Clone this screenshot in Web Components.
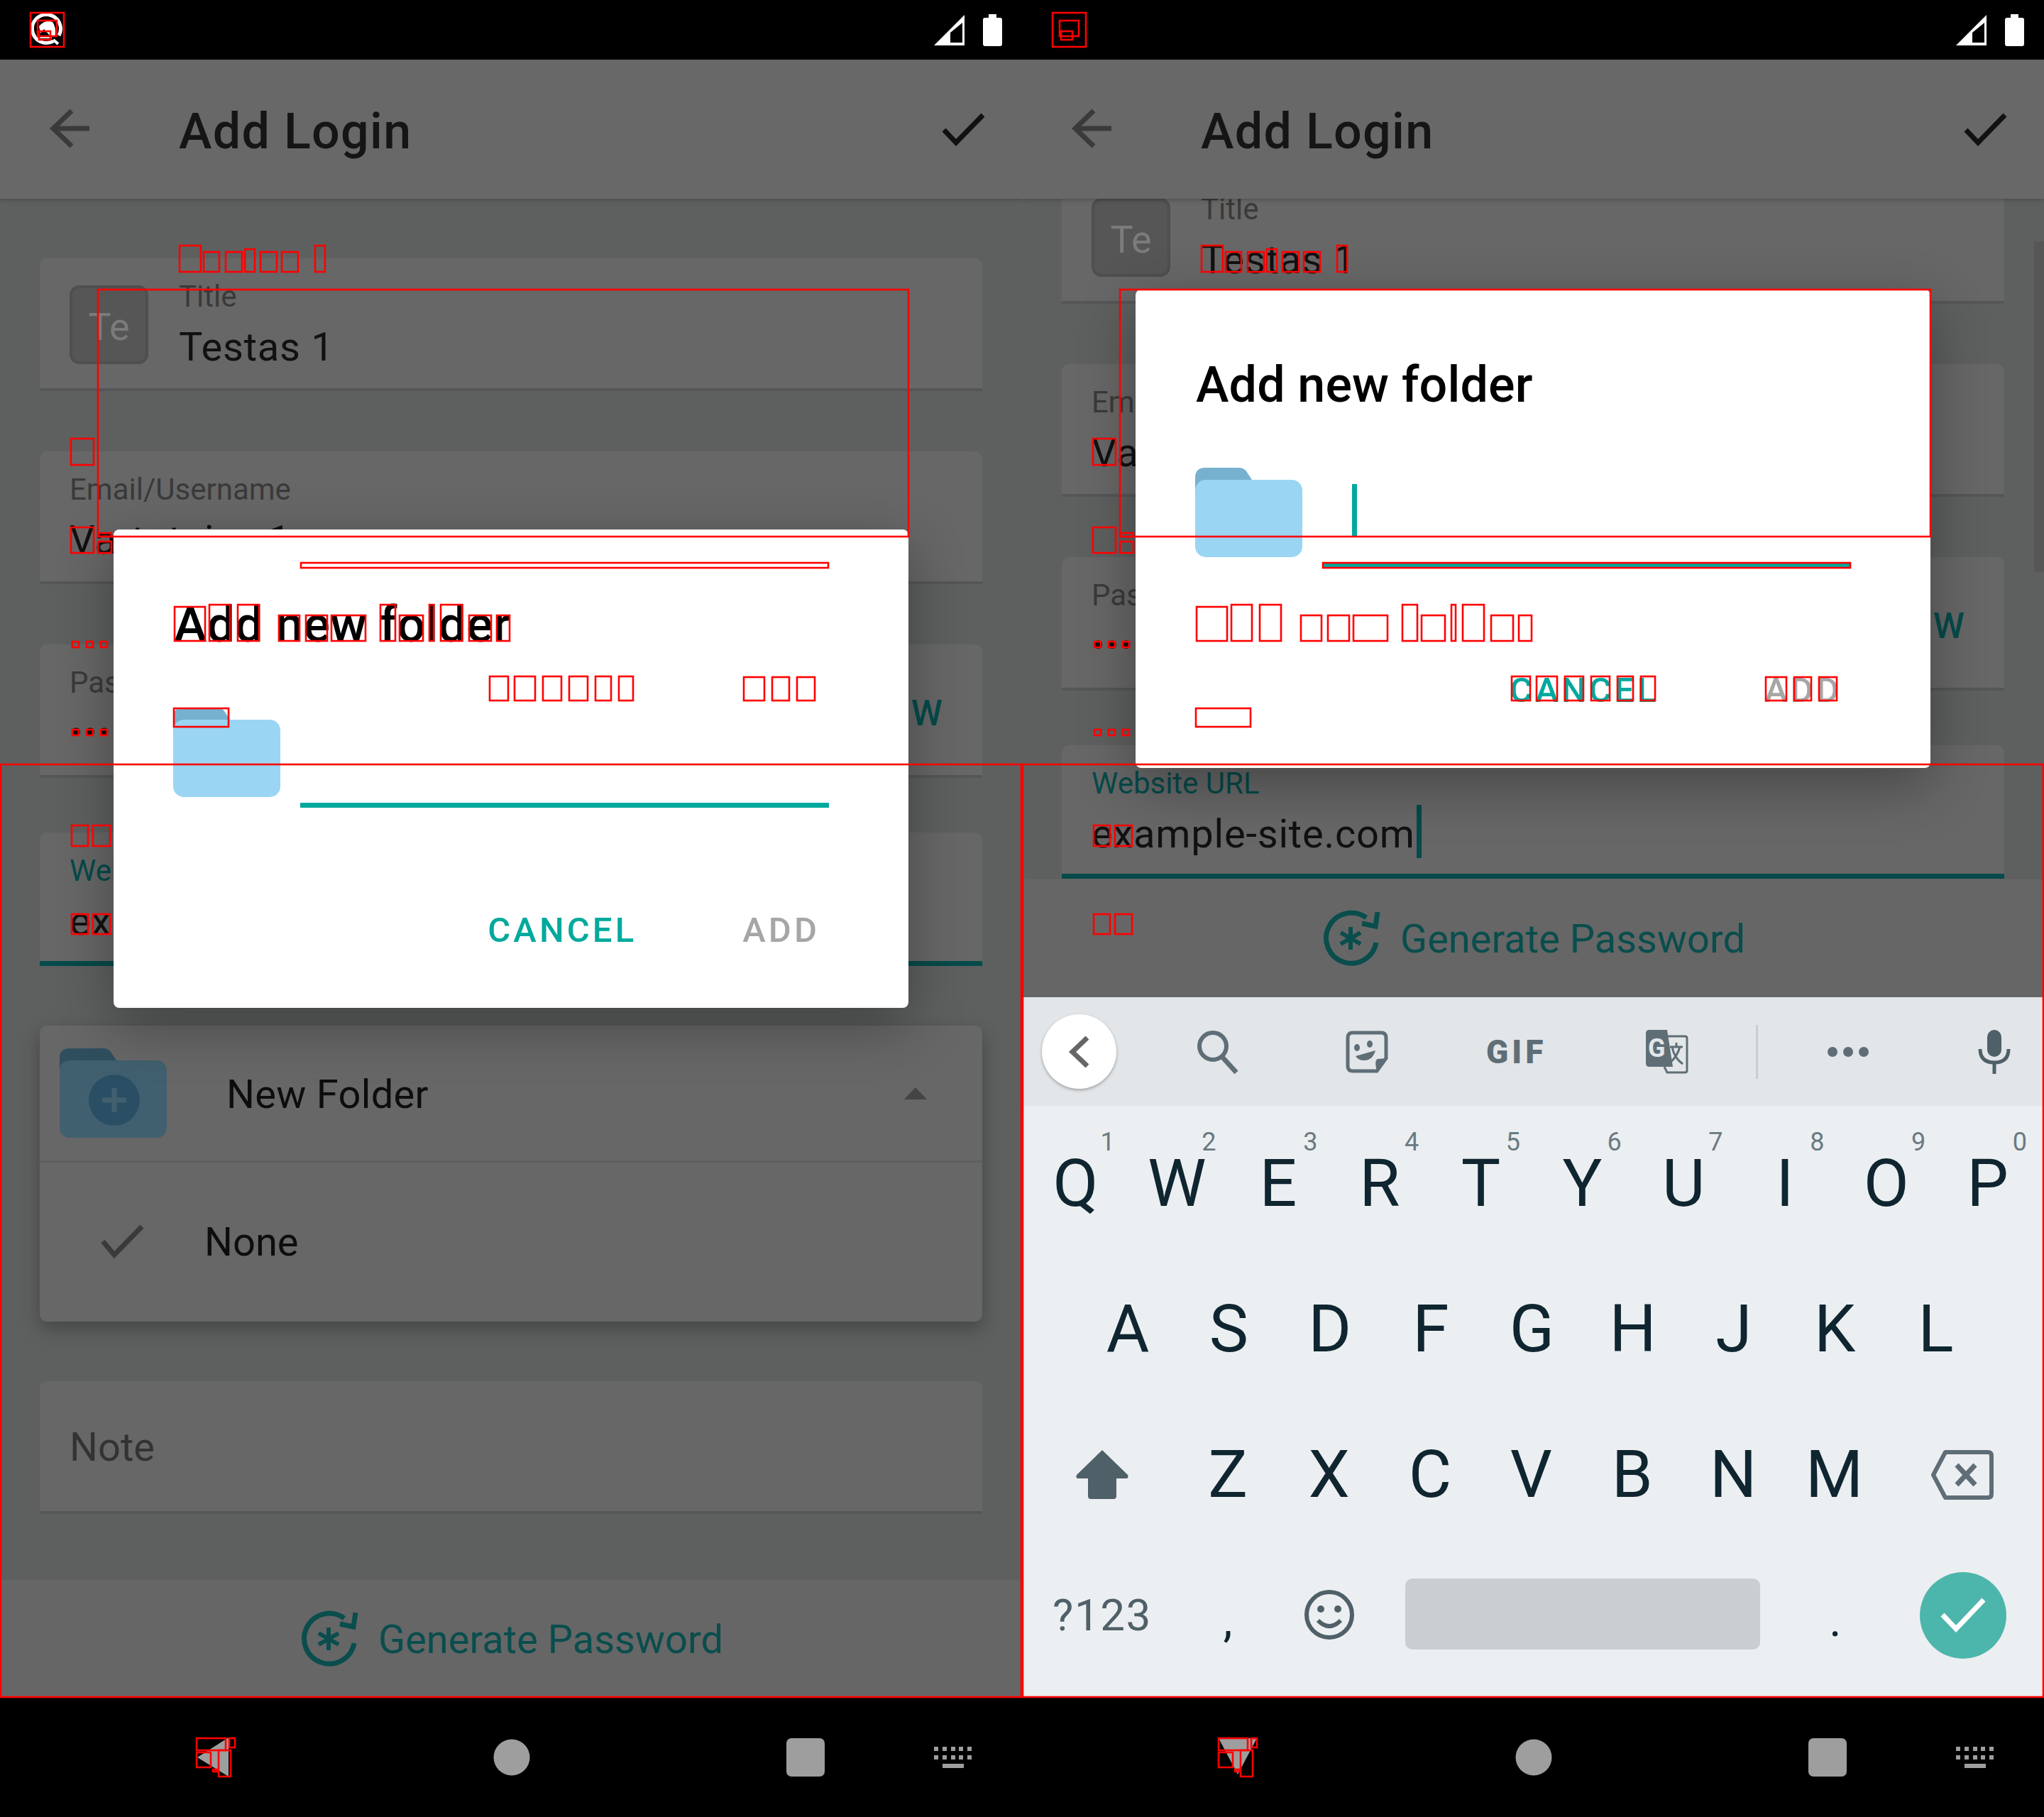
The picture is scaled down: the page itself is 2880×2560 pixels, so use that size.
<!DOCTYPE html>
<html>
<head>
<meta charset="utf-8">
<title>Add Login</title>
<style>
   html, body { margin: 0; padding: 0; background: #000; }
   body { font-family: Roboto, "Liberation Sans", sans-serif; width: 2880px; height: 2560px; display: flex; overflow: hidden; }
</style>
</head>
<body>

<phone-screen>
   <status-bar app-icon></status-bar>
   <app-toolbar>Add Login</app-toolbar>
   <form-scroll>
      <form-field style="margin-top:84px" label="Title" value="Testas 1" logo="Te"></form-field>
      <form-field style="margin-top:85px" label="Email/Username" value="Vartotojas 1"></form-field>
      <form-field style="margin-top:85px;height:188px" label="Password" value="•••••••" action="SHOW"></form-field>
      <form-field style="margin-top:77px;height:188px" label="Website URL" value="example-site.com" focused></form-field>
      <folder-select style="margin-top:84px"></folder-select>
      <form-field style="margin-top:84px" placeholder="Note"></form-field>
   </form-scroll>
   <generate-bar></generate-bar>
   <nav-bar></nav-bar>
   <folder-dialog style="top:746px"></folder-dialog>
   <glitch-boxes></glitch-boxes>
</phone-screen>

<phone-screen>
   <status-bar></status-bar>
   <app-toolbar>Add Login</app-toolbar>
   <form-scroll scrolled>
      <form-field style="margin-top:84px" label="Title" value="Testas 1" logo="Te"></form-field>
      <form-field style="margin-top:85px" label="Email/Username" value="Vartotojas 1"></form-field>
      <form-field style="margin-top:85px;height:188px" label="Password" value="•••••••" action="SHOW"></form-field>
      <form-field style="margin-top:77px;height:188px" label="Website URL" value="example-site.com" focused></form-field>
   </form-scroll>
   <generate-bar></generate-bar>
   <soft-keyboard></soft-keyboard>
   <nav-bar pointing-down></nav-bar>
   <folder-dialog style="top:408px" caret></folder-dialog>
   <glitch-boxes></glitch-boxes>
</phone-screen>

<script>
class PhoneScreen extends HTMLElement {
   constructor() {
      super();
      this.attachShadow({ mode: 'open' });
      this.shadowRoot.innerHTML = `
         <style>
            :host { display: flex; flex-direction: column; position: relative; width: 1440px; height: 2560px; overflow: hidden; flex: none; background: #5e6060; }
         </style>
         <slot></slot>
      `;
   }
}
customElements.define('phone-screen', PhoneScreen);

class StatusBar extends HTMLElement {
   constructor() {
      super();
      this.attachShadow({ mode: 'open' });
   }
   connectedCallback() {
      const appIcon = this.hasAttribute('app-icon') ? `
         <svg width="50" height="50" viewBox="0 0 50 50">
            <path d="M33 41 A20 20 0 1 1 41 33" fill="none" stroke="#fff" stroke-width="5"/>
            <path d="M33 39 L40 45" stroke="#fff" stroke-width="4"/>
            <path d="M13 20 Q22 10 32 14 Q37 20 36 33 L28 33 L20 24 L15 30 Z" fill="#fff"/>
            <rect x="13" y="35" width="18" height="2" fill="#fff"/>
         </svg>` : '<span></span>';
      this.shadowRoot.innerHTML = `
         <style>
            :host { display: flex; flex: none; height: 84px; background: #000; align-items: center; padding: 0 28px 0 42px; box-sizing: border-box; justify-content: space-between; }
            svg { display: block; }
            .right { display: flex; align-items: flex-start; gap: 26px; }
         </style>
         ${appIcon}
         <div class="right">
            <svg width="43" height="44" viewBox="0 0 43 44">
               <path fill-rule="evenodd" d="M0 44 L43 1 L43 44 Z M23 26 L23 40 L40 40 L40 12 Z" fill="#fff"/>
            </svg>
            <svg width="27" height="45" viewBox="0 0 27 45">
               <path d="M8 0 H19 V5 H24 Q27 5 27 8 V42 Q27 45 24 45 H3 Q0 45 0 42 V8 Q0 5 3 5 H8 Z" fill="#fff"/>
            </svg>
         </div>
      `;
   }
}
customElements.define('status-bar', StatusBar);

class AppToolbar extends HTMLElement {
   constructor() {
      super();
      this.attachShadow({ mode: 'open' });
      this.shadowRoot.innerHTML = `
         <style>
            :host { display: flex; flex: none; position: relative; z-index: 2; height: 196px; align-items: center; background: #686868; box-shadow: 0 2px 6px rgba(0,0,0,.22); box-sizing: border-box; padding: 0 50px 0 68px; color: #151515; font-size: 70px; font-weight: 500; }
            svg { display: block; flex: none; }
            .title { flex: 1; margin-left: 124px; line-height: 80px; margin-top: 5px; letter-spacing: 1.300px; }
            .back { margin-top: 2px; }
            .done { margin-top: 3px; }
         </style>
         <svg class="back" width="60" height="60" viewBox="0 0 60 60">
            <path d="M58 28 H8 M33 3 L7 28 L33 53" fill="none" stroke="#3a3a3a" stroke-width="7"/>
         </svg>
         <div class="title"><slot></slot></div>
         <svg class="done" width="64" height="50" viewBox="0 0 64 50">
            <path d="M4 24 L21 42 L59 3" fill="none" stroke="#111" stroke-width="7"/>
         </svg>
      `;
   }
}
customElements.define('app-toolbar', AppToolbar);

class FormScroll extends HTMLElement {
   constructor() {
      super();
      this.attachShadow({ mode: 'open' });
   }
   connectedCallback() {
      const scrolled = this.hasAttribute('scrolled');
      this.shadowRoot.innerHTML = `
         <style>
            :host { display: block; flex: 1; min-height: 0; position: relative; overflow: hidden; background: #5e6060; }
            .inner { display: flex; flex-direction: column; margin-top: ${scrolled ? -123 : 0}px; }
            .thumb { position: absolute; top: 60px; right: 0; width: 14px; height: 466px; background: #565656; }
         </style>
         <div class="inner"><slot></slot></div>
         ${scrolled ? '<div class="thumb"></div>' : ''}
      `;
   }
}
customElements.define('form-scroll', FormScroll);

class FormField extends HTMLElement {
   constructor() {
      super();
      this.attachShadow({ mode: 'open' });
   }
   connectedCallback() {
      const label = this.getAttribute('label');
      const value = this.getAttribute('value');
      const logo = this.getAttribute('logo');
      const action = this.getAttribute('action');
      const placeholder = this.getAttribute('placeholder');
      const focused = this.hasAttribute('focused');
      this.shadowRoot.innerHTML = `
         <style>
            :host { display: flex; flex: none; box-sizing: border-box; height: 187px; margin: 0 56px; padding: 0 0 0 42px; background: #676767; border-radius: 10px 10px 0 0; border-bottom: ${focused ? '7px solid #064a4a' : '4px solid #545658'}; }
            .logo { flex: none; width: 111px; height: 111px; box-sizing: border-box; margin: 38px 43px 0 0; border: 4px solid #4f4f4f; border-radius: 14px; background: #565656; color: #7b7b7b; font-size: 54px; line-height: 109px; text-align: center; }
            .col { flex: 1; padding-top: 30px; min-width: 0; }
            .label { font-size: 42px; line-height: 48px; color: ${focused ? '#064a4a' : '#3a3a3a'}; }
            .value { font-size: 56px; line-height: 64px; margin-top: 15px; color: #111; white-space: nowrap; letter-spacing: .8px; }
            .value span { display: inline-block; position: relative; }
            .caret::after { content: ''; position: absolute; left: 100%; margin-left: 2px; top: -9px; width: 7px; height: 75px; background: #064a4a; }
            .placeholder { font-size: 56px; line-height: 64px; margin-top: 31px; color: #333; }
            .action { flex: none; align-self: center; padding: 10px 54px 0 0; font-size: 50px; line-height: 56px; font-weight: 500; letter-spacing: 2px; color: #064a4a; }
         </style>
         ${logo ? `<div class="logo">${logo}</div>` : ''}
         <div class="col">
            ${placeholder
               ? `<div class="placeholder">${placeholder}</div>`
               : `<div class="label">${label}</div>
                  <div class="value"><span class="${focused ? 'caret' : ''}">${value}</span></div>`}
         </div>
         ${action ? `<div class="action">${action}</div>` : ''}
      `;
   }
}
customElements.define('form-field', FormField);

class FolderSelect extends HTMLElement {
   constructor() {
      super();
      this.attachShadow({ mode: 'open' });
      this.shadowRoot.innerHTML = `
         <style>
            :host { display: block; flex: none; height: 417px; margin: 0 56px; background: #676767; border-radius: 10px; box-shadow: 0 10px 26px rgba(0,0,0,.28); color: #0d0d0d; font-size: 56px; }
            .head { display: flex; align-items: center; height: 193px; box-sizing: border-box; padding: 0 78px 0 28px; border-bottom: 3px solid #5f5f5f; }
            .head svg { display: block; flex: none; }
            .name { flex: 1; margin-left: 84px; line-height: 64px; margin-top: 4px; letter-spacing: .3px; }
            .row { display: flex; align-items: center; height: 224px; box-sizing: border-box; padding: 0 0 0 86px; }
            .row svg { flex: none; display: block; }
            .row span { margin-left: 84px; line-height: 64px; }
         </style>
         <div class="head">
            <svg width="151" height="126" viewBox="0 0 151 126">
               <path d="M0 14 Q0 0 14 0 H62 Q70 0 74 8 L82 20 H70 V60 H0 Z" fill="#2f4f5f"/>
               <rect x="0" y="17" width="151" height="109" rx="14" fill="#41606f"/>
               <circle cx="77" cy="73" r="36" fill="#2a4f64"/>
               <path d="M77 56 V90 M60 73 H94" stroke="#41606f" stroke-width="7"/>
            </svg>
            <div class="name">New Folder</div>
            <svg width="32" height="17" viewBox="0 0 32 17"><path d="M16 0 L32 17 H0 Z" fill="#444"/></svg>
         </div>
         <div class="row">
            <svg width="62" height="48" viewBox="0 0 62 48">
               <path d="M3 23 L19 42 L58 2" fill="none" stroke="#3a3a3a" stroke-width="7"/>
            </svg>
            <span>None</span>
         </div>
      `;
   }
}
customElements.define('folder-select', FolderSelect);

class GenerateBar extends HTMLElement {
   constructor() {
      super();
      this.attachShadow({ mode: 'open' });
      this.shadowRoot.innerHTML = `
         <style>
            :host { display: flex; flex: none; height: 167px; align-items: center; box-sizing: border-box; padding: 0 0 0 423px; background: #666; border-top: 1px solid #626363; color: #0a4d4d; font-size: 56px; gap: 28px; }
            svg { display: block; flex: none; }
            span { line-height: 64px; margin-top: 1px; }
         </style>
         <svg width="82" height="80" viewBox="0 0 82 80">
            <path d="M76 46 A35.500 35.500 0 1 1 62 11" fill="none" stroke="#0a4d4d" stroke-width="7"/>
            <path d="M78 3 L75 23 L56 19" fill="none" stroke="#0a4d4d" stroke-width="7"/>
            <path d="M40 24 V56 M26 32 L54 48 M54 32 L26 48" stroke="#0a4d4d" stroke-width="6"/>
         </svg>
         <span>Generate Password</span>
      `;
   }
}
customElements.define('generate-bar', GenerateBar);

class NavBar extends HTMLElement {
   constructor() {
      super();
      this.attachShadow({ mode: 'open' });
   }
   connectedCallback() {
      const back = this.hasAttribute('pointing-down')
         ? '<path d="M1 1 H55 L28 52 Z" fill="#9e9e9e"/>'
         : '<path d="M2 28 L46 0 V55 Z" fill="#9e9e9e"/>';
      this.shadowRoot.innerHTML = `
         <style>
            :host { display: flex; flex: none; height: 168px; align-items: center; background: #000; padding-left: 276px; box-sizing: border-box; }
            svg { display: block; flex: none; }
         </style>
         <svg width="56" height="56" viewBox="0 0 56 56" style="margin-right:363px">${back}</svg>
         <svg width="52" height="52" viewBox="0 0 52 52" style="margin-right:361px"><circle cx="26" cy="26" r="25.500" fill="#9e9e9e"/></svg>
         <svg width="54" height="54" viewBox="0 0 54 54" style="margin-right:154px"><rect width="54" height="54" rx="7" fill="#9e9e9e"/></svg>
         <svg width="58" height="30" viewBox="0 0 58 30" fill="#9e9e9e">
            <rect x="0" y="0" width="6" height="6"/><rect x="12" y="0" width="6" height="6"/><rect x="24" y="0" width="6" height="6"/><rect x="35" y="0" width="6" height="6"/><rect x="47" y="0" width="6" height="6"/>
            <rect x="0" y="12" width="6" height="6"/><rect x="12" y="12" width="6" height="6"/><rect x="24" y="12" width="6" height="6"/><rect x="35" y="12" width="6" height="6"/><rect x="47" y="12" width="6" height="6"/>
            <rect x="12" y="24" width="30" height="6"/>
         </svg>
      `;
   }
}
customElements.define('nav-bar', NavBar);

class FolderDialog extends HTMLElement {
   constructor() {
      super();
      this.attachShadow({ mode: 'open' });
   }
   connectedCallback() {
      const caret = this.hasAttribute('caret') ? '<div class="caret"></div>' : '';
      this.shadowRoot.innerHTML = `
         <style>
            :host { position: absolute; left: 160px; width: 1120px; height: 674px; z-index: 5; display: block; background: #fff; border-radius: 8px; box-shadow: 0 24px 80px rgba(0,0,0,.32); }
            h2 { margin: 0; padding: 94px 0 0 85px; font-size: 70px; line-height: 80px; font-weight: 500; color: #000; letter-spacing: .15px; }
            .body { display: flex; margin: 77px 0 0 84px; }
            svg { display: block; flex: none; }
            .input { position: relative; width: 745px; height: 141px; box-sizing: border-box; margin-left: 28px; border-bottom: 7px solid #00a99d; }
            .caret { position: absolute; left: 42px; top: 23px; width: 7px; height: 75px; background: #00a99d; }
            .buttons { display: flex; justify-content: flex-end; gap: 149px; margin-top: 145px; padding-right: 125px; font-size: 49px; line-height: 56px; font-weight: 500; letter-spacing: 4.100px; }
            .cancel { color: #00a99d; }
            .add { color: #a6a6a6; }
         </style>
         <h2>Add new folder</h2>
         <div class="body">
            <svg width="151" height="126" viewBox="0 0 151 126">
               <path d="M0 14 Q0 0 14 0 H62 Q70 0 74 8 L82 20 H70 V60 H0 Z" fill="#76b1d0"/>
               <rect x="0" y="17" width="151" height="109" rx="15" fill="#9ad5f4"/>
            </svg>
            <div class="input">${caret}</div>
         </div>
         <div class="buttons"><span class="cancel">CANCEL</span><span class="add">ADD</span></div>
      `;
   }
}
customElements.define('folder-dialog', FolderDialog);

class SoftKeyboard extends HTMLElement {
   constructor() {
      super();
      this.attachShadow({ mode: 'open' });
      const key = (letter, digit) => `<div class="key">${letter}${digit ? `<i>${digit}</i>` : ''}</div>`;
      const row1 = 'QWERTYUIOP'.split('').map((l, i) => key(l, String((i + 1) % 10))).join('');
      const row2 = 'ASDFGHJKL'.split('').map(l => key(l)).join('');
      const row3 = 'ZXCVBNM'.split('').map(l => key(l)).join('');
      const ink = '#5f6e76';
      this.shadowRoot.innerHTML = `
         <style>
            :host { display: block; flex: none; height: 987px; background: #eceff1; color: #0f2530; font-size: 93px; }
            svg { display: block; flex: none; }
            .tools { display: flex; align-items: center; height: 153px; background: #e2e6e9; padding-left: 28px; }
            .pill { flex: none; width: 105px; height: 105px; border-radius: 50%; background: #fff; box-shadow: 0 2px 4px rgba(0,0,0,.3); display: flex; align-items: center; justify-content: center; }
            .gif { flex: none; font-size: 46px; line-height: 46px; font-weight: 900; color: ${ink}; letter-spacing: 5px; }
            .sep { flex: none; width: 3px; height: 76px; background: #c9ced1; }
            .rows { padding-top: 7px; }
            .row { display: flex; height: 205px; line-height: 205px; }
            .row.one { padding-left: 4px; }
            .row.two { padding-left: 78px; }
            .key { position: relative; width: 142.800px; text-align: center; flex: none; }
            .row.two .key { width: 142.300px; }
            .row.three .key { width: 142.400px; }
            .key i { position: absolute; top: 26px; right: 16px; font-size: 36px; line-height: 36px; font-style: normal; color: #6b7a82; }
            .cell { display: flex; align-items: center; justify-content: center; flex: none; }
            .last { display: grid; grid-template-columns: 226px 128px 158px 28px 500px 212px 148px; align-items: center; height: 192px; color: #4f6068; }
            .last > div { display: flex; justify-content: center; align-items: center; }
            .sym { font-size: 62px; line-height: 70px; letter-spacing: 1.500px; }
            .comma, .dot { font-size: 66px; line-height: 70px; color: #0f2530; margin-top: 13px; }
            .space { grid-column: 5; height: 100px; background: #c9ced1; border-radius: 10px; margin-top: -4px; }
            .enter { width: 122px; height: 122px; border-radius: 50%; background: #4db6ac; }
            .emoji { margin-top: -2px; }
         </style>
         <div class="tools">
            <div class="pill">
               <svg width="34" height="46" viewBox="0 0 34 46"><path d="M28 3 L7 23 L28 43" fill="none" stroke="#666" stroke-width="7"/></svg>
            </div>
            <svg width="62" height="64" viewBox="0 0 62 64" style="margin-left:111px"><circle cx="25" cy="24" r="19" fill="none" stroke="${ink}" stroke-width="6"/><path d="M38 39 L58 61" stroke="${ink}" stroke-width="7"/></svg>
            <svg width="60" height="60" viewBox="0 0 60 60" style="margin-left:150px">
               <path d="M10 3 H50 Q57 3 57 10 V39 L44 57 H10 Q3 57 3 50 V10 Q3 3 10 3 Z" fill="none" stroke="${ink}" stroke-width="5"/>
               <path d="M57 39 L44 57 Q40 42 45 40 Z" fill="${ink}"/>
               <ellipse cx="16" cy="24" rx="4" ry="5" fill="${ink}"/><ellipse cx="34" cy="19" rx="4" ry="5" fill="${ink}"/>
               <path d="M14 36 L42 28 Q38 42 26 42 Q18 42 14 36 Z" fill="${ink}"/>
            </svg>
            <div class="gif" style="margin-left:138px">GIF</div>
            <svg width="60" height="62" viewBox="0 0 60 62" style="margin-left:140px">
               <path d="M5 0 H30 L38 52 H5 Q0 52 0 47 V5 Q0 0 5 0 Z" fill="${ink}"/>
               <path d="M30 9 H55 Q58 9 58 12 V57 Q58 60 55 60 H30 L26 52" fill="none" stroke="${ink}" stroke-width="3"/>
               <text x="3" y="38" font-family="Roboto" font-weight="700" font-size="36" fill="#e2e6e9">G</text>
               <path d="M34 24 H52 M43 18 V24 M37 24 Q40 40 52 48 M48 24 Q44 38 34 46" fill="none" stroke="${ink}" stroke-width="3"/>
            </svg>
            <div class="sep" style="margin-left:95px"></div>
            <svg width="58" height="14" viewBox="0 0 58 14" fill="${ink}" style="margin-left:98px"><circle cx="7" cy="7" r="7"/><circle cx="29" cy="7" r="7"/><circle cx="51" cy="7" r="7"/></svg>
            <svg width="46" height="62" viewBox="0 0 46 62" style="margin-left:154px">
               <rect x="13" y="0" width="20" height="38" rx="10" fill="#4f6068"/>
               <path d="M3 27 Q3 46 23 46 Q43 46 43 27" fill="none" stroke="#4f6068" stroke-width="5"/>
               <path d="M23 46 V62" stroke="#4f6068" stroke-width="5"/>
            </svg>
         </div>
         <div class="rows">
            <div class="row one">${row1}</div>
            <div class="row two">${row2}</div>
            <div class="row three">
               <div class="cell" style="width:219px;padding-left:7px;box-sizing:border-box">
                  <svg width="74" height="69" viewBox="0 0 74 69"><path d="M37 0 L73 35 Q75 40 70 40 H57 V65 Q57 69 53 69 H21 Q17 69 17 65 V40 H4 Q-1 40 1 35 Z" fill="#4f6068"/></svg>
               </div>
               ${row3}
               <div class="cell" style="width:218px">
                  <svg width="88" height="70" viewBox="0 0 88 70">
                     <path d="M20 3 H80 Q85 3 85 8 V62 Q85 67 80 67 H20 L3 35 Z" fill="none" stroke="${ink}" stroke-width="6" stroke-linejoin="round"/>
                     <path d="M36 21 L62 49 M62 21 L36 49" stroke="${ink}" stroke-width="7"/>
                  </svg>
               </div>
            </div>
            <div class="last">
               <div class="sym">?123</div>
               <div class="comma">,</div>
               <div class="emoji">
                  <svg width="72" height="72" viewBox="0 0 72 72" fill="none" stroke="#4f6068">
                     <circle cx="36" cy="36" r="32" stroke-width="6"/>
                     <circle cx="24" cy="28" r="5" fill="#4f6068" stroke="none"/><circle cx="48" cy="28" r="5" fill="#4f6068" stroke="none"/>
                     <path d="M20 44 Q36 60 52 44" stroke-width="6"/>
                  </svg>
               </div>
               <div class="space"></div>
               <div class="dot">.</div>
               <div>
                  <div class="enter cell">
                     <svg width="64" height="50" viewBox="0 0 64 50"><path d="M3 24 L22 44 L61 3" fill="none" stroke="#fff" stroke-width="7"/></svg>
                  </div>
               </div>
            </div>
         </div>
      `;
   }
}
customElements.define('soft-keyboard', SoftKeyboard);

// outlines of a stale frame, they sit at the same spot on both screens
const GLITCH = [
   [42, 17, 91, 67], [52, 28, 81, 52], [54, 43, 72, 57],
   [252, 345, 284, 384], [286, 354, 310, 384], [317, 354, 342, 384], [344, 350, 360, 384], [366, 354, 391, 384], [396, 354, 421, 384], [443, 345, 459, 384],
   [137, 407, 1281, 757],
   [99, 617, 133, 656], [99, 742, 133, 780], [137, 762, 158, 780], [137, 750, 158, 757],
   [423, 792, 1168, 801],
   [245, 854, 290, 904], [294, 851, 325, 904], [334, 851, 366, 904], [392, 866, 423, 904], [430, 866, 462, 904], [466, 866, 516, 904],
   [535, 851, 558, 904], [562, 866, 597, 904], [604, 851, 612, 904], [620, 851, 652, 904], [660, 866, 693, 904], [699, 866, 719, 904],
   [689, 952, 717, 988], [724, 952, 755, 988], [764, 952, 792, 988], [801, 952, 829, 988], [838, 952, 862, 988], [871, 952, 893, 988],
   [1047, 953, 1078, 988], [1087, 953, 1113, 988], [1122, 953, 1149, 988],
   [244, 997, 323, 1025],
   [101, 903, 112, 913], [121, 903, 132, 913], [141, 903, 152, 913],
   [101, 1027, 112, 1037], [121, 1027, 132, 1037], [141, 1027, 152, 1037],
   [100, 1162, 125, 1193], [130, 1162, 156, 1193],
   [100, 1287, 125, 1317], [130, 1287, 156, 1317],
   [0, 1076, 1440, 2392],
   [276, 2448, 319, 2467], [276, 2468, 298, 2491], [322, 2448, 332, 2463], [307, 2465, 326, 2504], [299, 2492, 307, 2497]
];

class GlitchBoxes extends HTMLElement {
   constructor() {
      super();
      this.attachShadow({ mode: 'open' });
      const rects = GLITCH.map(([x1, y1, x2, y2]) =>
         `<rect x="${x1 + 1}" y="${y1 + 1}" width="${x2 - x1 - 2}" height="${y2 - y1 - 2}"/>`).join('');
      this.shadowRoot.innerHTML = `
         <style>
            :host { position: absolute; inset: 0; z-index: 9; display: block; pointer-events: none; }
         </style>
         <svg width="1440" height="2560" viewBox="0 0 1440 2560" fill="none" stroke="#f00" stroke-width="2.600">${rects}</svg>
      `;
   }
}
customElements.define('glitch-boxes', GlitchBoxes);
</script>
</body>
</html>
